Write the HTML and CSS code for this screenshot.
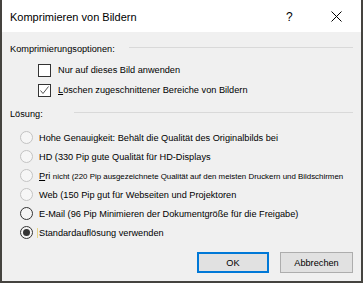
FILE: index.html
```html
<!DOCTYPE html>
<html>
	<head>
		<meta charset="utf-8">
		<title>Komprimieren von Bildern</title>
		<link rel="stylesheet" href="styles.css">
	</head>
	<body>
		<div class="dialog">
			<div class="titlebar">
				<span class="title">Komprimieren von Bildern</span>
				<span class="help">?</span>
				<span class="close">
					<svg width="11" height="11" viewBox="0 0 11 11"><path d="M0.5 0.5L10.5 10.5M10.5 0.5L0.5 10.5" stroke="#000" stroke-width="1" fill="none"/></svg>
				</span>
			</div>
			<div class="content">
				<div class="group-head">
					<span>Komprimierungsoptionen:</span>
					<span class="rule rule-opts"></span>
				</div>
				<div class="checks">
					<div class="check"><span class="box"></span><span>Nur auf dieses Bild anwenden</span></div>
					<div class="check">
						<span class="box">
							<svg width="11" height="11" viewBox="0 0 11 11"><path d="M1.5 5.5L4 8.5L9.5 1.5" stroke="#555" stroke-width="1" fill="none"/></svg>
						</span>
						<span><u>L</u>öschen zugeschnittener Bereiche von Bildern</span>
					</div>
				</div>
				<div class="group-head">
					<span>Lösung:</span>
					<span class="rule rule-res"></span>
				</div>
				<div class="radios">
					<div class="radio"><span class="dot off"></span><span class="lbl">Hohe Genauigkeit: Behält die Qualität des Originalbilds bei</span></div>
					<div class="radio"><span class="dot off"></span><span class="lbl">HD (330 Pip gute Qualität für HD-Displays</span></div>
					<div class="radio"><span class="dot off"></span><span class="lbl"><u>P</u>ri <small>nicht (220 Pip ausgezeichnete Qualität auf den meisten Druckern und Bildschirmen</small></span></div>
					<div class="radio"><span class="dot off"></span><span class="lbl">Web (150 Pip gut für Webseiten und Projektoren</span></div>
					<div class="radio"><span class="dot"></span><span class="lbl">E-Mail (96 Pip Minimieren der Dokumentgröße für die Freigabe)</span></div>
					<div class="radio"><span class="dot on"></span><span class="lbl focus">Standardauflösung verwenden</span></div>
				</div>
				<div class="buttons">
					<button class="btn btn-default">OK</button>
					<button class="btn">Abbrechen</button>
				</div>
			</div>
		</div>
	</body>
</html>
```
FILE: styles.css
```css
* {margin:0; padding:0; box-sizing:border-box;}
html, body {background:#45433f; width:363px; height:283px; overflow:hidden;}
body {font-family:"Liberation Sans", Arial, sans-serif; color:#000;}

.dialog {width:359px; height:281px; margin-left:2px; background:#f0f0f0; display:flex; flex-direction:column;}

.titlebar {height:32px; background:#fff; display:flex; align-items:center; padding-left:8px;}
.title {font-size:11px; flex:1; padding-top:1px;}
.help {font-size:12px; width:44px; margin-right:1px; padding-top:1px;}
.close {width:30px; display:flex; align-items:center;}
.close svg {display:block;}

.content {flex:1; padding:10px 8px 0 8px; font-size:9.2px; display:flex; flex-direction:column;}

.group-head {display:flex; align-items:center; height:14px;}
.rule {flex:1; border-top:1px solid #d9d9d9; margin-top:-3px;}
.rule-opts {margin-left:14px;}
.rule-res {margin-left:31px; margin-right:0;}

.checks {padding:4px 0 7px 28px;}
.check {display:flex; align-items:center; height:20px; gap:7px;}
.box {width:13px; height:13px; border:1px solid #333; background:#fff; display:flex; align-items:center; justify-content:center;}
.box svg {display:block;}

.radios {padding:7px 0 0 10px;}
.radio {display:flex; align-items:center; height:19px; gap:6px;}
.dot {width:13px; height:13px; border:1px solid #333; border-radius:50%; background:#f4f4f4; display:flex; align-items:center; justify-content:center; flex:none;}
.dot.off {border-color:#c3c3c3; background:#f6f6f6;}
.dot.on::after {content:""; width:7px; height:7px; border-radius:50%; background:#333;}
.lbl small {font-size:7.9px;}
.focus {border-left:1px solid #e8d488; padding-left:1px; margin-left:-2px;}

.buttons {display:flex; justify-content:flex-end; gap:11px; margin-top:10px;}
.btn {width:73px; height:21px; font-family:inherit; font-size:9.2px; background:#e1e1e1; border:1px solid #adadad;}
.btn-default {width:72px; border:2px solid #0078d7;}
```
